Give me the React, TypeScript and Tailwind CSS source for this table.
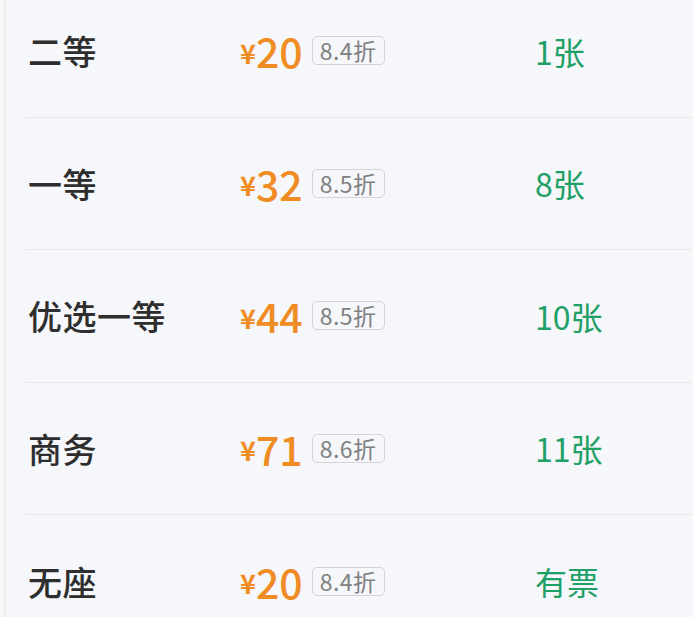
/**
 * Seat class ticket list — price / discount / availability rows
 */

const rows = [
  { name: '二等', price: '20', discount: '8.4折', left: '1张' },
  { name: '一等', price: '32', discount: '8.5折', left: '8张' },
  { name: '优选一等', price: '44', discount: '8.5折', left: '10张' },
  { name: '商务', price: '71', discount: '8.6折', left: '11张' },
  { name: '无座', price: '20', discount: '8.4折', left: '有票' },
];

export default function App() {
  return (
    <div
      className="w-[693px] h-[617px] overflow-hidden bg-[#f5f7fa] pl-[4px]"
      style={{ fontFamily: '"Noto Sans CJK SC", "Noto Sans", sans-serif' }}
    >
      <div className="h-[700px] border-l-2 border-[#ecebe8] -mt-[15px]">
        {rows.map((row, i) => (
          <div key={i} className="h-[132.5px] flex flex-col pl-[20px]">
            <div className="flex-1 flex items-center">
              <div className="w-[214px] pl-[2px] text-[34px] font-medium text-[#2e2e2e] tracking-[0.5px]">{row.name}</div>
              <div className="w-[295px] flex items-center">
                <span className="text-[27px] font-bold text-[#f08c24] leading-none mt-[3px]">¥</span>
                <span className="text-[41px] font-medium text-[#f08c24] leading-none">{row.price}</span>
                <span className="ml-[9px] h-[29px] px-[7px] flex items-center rounded-[5px] border border-[#d4d4d4] text-[23px] text-[#808080] leading-none tracking-[0.5px]">
                  {row.discount}
                </span>
              </div>
              <div className="text-[32px] text-[#1fa066]">{row.left}</div>
            </div>
            {i < rows.length - 1 && <div className="h-px bg-[#ebe8e2]" />}
          </div>
        ))}
      </div>
    </div>
  );
}
